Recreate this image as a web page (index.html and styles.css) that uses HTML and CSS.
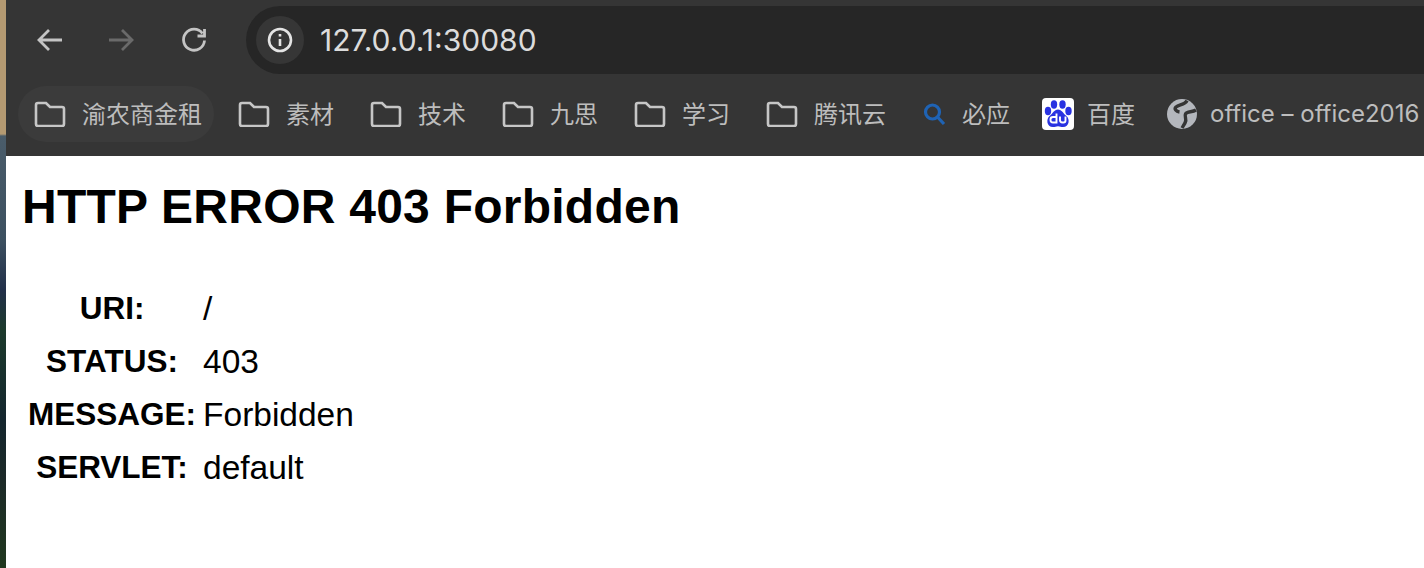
FILE: index.html
```html
<!DOCTYPE html>
<html lang="zh">
<head>
<meta charset="utf-8">
<title>Error 403 Forbidden</title>
<link rel="stylesheet" href="styles.css">
</head>
<body>
<div class="strip"></div>
<div class="window">
  <header class="chrome">
    <div class="navrow">
      <div class="navbtns">
        <svg class="nav" viewBox="0 0 28 28"><path d="M26 14H3M13 4 3 14 13 24"/></svg>
        <svg class="nav dim" viewBox="0 0 28 28"><path d="M2 14H25M15 4 25 14 15 24"/></svg>
        <svg class="nav reload" viewBox="0 0 28 28"><path d="M22.500 7.500A10.500 10.500 0 1 0 24.500 14.500M24.500 3V10H17.500"/></svg>
      </div>
      <div class="omnibox">
        <span class="infochip">
          <svg class="info" viewBox="0 0 26 26"><circle cx="13" cy="13" r="11"/><path d="M13 12v7M13 7v2.500"/></svg>
        </span>
        <span class="url">127.0.0.1:30080</span>
      </div>
    </div>
    <nav class="bookmarks">
      <a class="bm active"><svg class="folder" viewBox="0 0 32 26"><path d="M2 4a2 2 0 0 1 2-2h8l4 4h12a2 2 0 0 1 2 2v15a2 2 0 0 1-2 2H4a2 2 0 0 1-2-2z"/></svg><span>渝农商金租</span></a>
      <a class="bm"><svg class="folder" viewBox="0 0 32 26"><path d="M2 4a2 2 0 0 1 2-2h8l4 4h12a2 2 0 0 1 2 2v15a2 2 0 0 1-2 2H4a2 2 0 0 1-2-2z"/></svg><span>素材</span></a>
      <a class="bm"><svg class="folder" viewBox="0 0 32 26"><path d="M2 4a2 2 0 0 1 2-2h8l4 4h12a2 2 0 0 1 2 2v15a2 2 0 0 1-2 2H4a2 2 0 0 1-2-2z"/></svg><span>技术</span></a>
      <a class="bm"><svg class="folder" viewBox="0 0 32 26"><path d="M2 4a2 2 0 0 1 2-2h8l4 4h12a2 2 0 0 1 2 2v15a2 2 0 0 1-2 2H4a2 2 0 0 1-2-2z"/></svg><span>九思</span></a>
      <a class="bm"><svg class="folder" viewBox="0 0 32 26"><path d="M2 4a2 2 0 0 1 2-2h8l4 4h12a2 2 0 0 1 2 2v15a2 2 0 0 1-2 2H4a2 2 0 0 1-2-2z"/></svg><span>学习</span></a>
      <a class="bm"><svg class="folder" viewBox="0 0 32 26"><path d="M2 4a2 2 0 0 1 2-2h8l4 4h12a2 2 0 0 1 2 2v15a2 2 0 0 1-2 2H4a2 2 0 0 1-2-2z"/></svg><span>腾讯云</span></a>
      <a class="bm bing"><svg class="search" viewBox="0 0 24 24"><circle cx="10.500" cy="10" r="7"/><path d="M15.500 15l6.500 7"/></svg><span>必应</span></a>
      <a class="bm baidu"><svg class="paw" viewBox="0 0 32 32"><rect width="32" height="32" rx="4" fill="#fff"/><g fill="#2932e1"><ellipse cx="6" cy="13" rx="3.200" ry="4.200"/><ellipse cx="12" cy="6.500" rx="3.200" ry="4.200"/><ellipse cx="20.500" cy="6.500" rx="3.200" ry="4.200"/><ellipse cx="26.500" cy="13" rx="3.200" ry="4.200"/><path d="M16 11.500c4 0 5 4 8.500 6.500 3.500 3 3 11-3.500 11-2 0-3-.8-5-.8s-3 .8-5 .8c-6.500 0-7-8-3.500-11 3.500-2.500 4.500-6.500 8.500-6.500z"/></g><path d="M14.500 15.500v9h-3.500a2.500 2.500 0 0 1-2.500-2.500v-.5a2.500 2.500 0 0 1 2.500-2.500h3.500M18 18.500v3.500a2.500 2.500 0 0 0 2.500 2.500h1a2 2 0 0 0 2-2v-4" fill="none" stroke="#fff" stroke-width="1.900"/></svg><span>百度</span></a>
      <a class="bm globe"><svg class="earth" viewBox="0 0 30 30"><circle cx="15" cy="15" r="15" fill="#b4b7bd"/><path d="M20 1.500C18 6 12 5.500 9 8c-2 2 0 4.500 3.500 5M29 11c-4 2.500-9 1-10.500 4-1.500 3 2 5-.5 9l-3 5" fill="none" stroke="#353535" stroke-width="3.400"/></svg><span>office – office2016</span></a>
    </nav>
  </header>
  <main class="page">
    <h2 class="title">HTTP ERROR 403 Forbidden</h2>
    <table class="details">
      <tr><th>URI:</th><td>/</td></tr>
      <tr><th>STATUS:</th><td>403</td></tr>
      <tr><th>MESSAGE:</th><td>Forbidden</td></tr>
      <tr><th>SERVLET:</th><td>default</td></tr>
    </table>
  </main>
</div>
</body>
</html>
```

FILE: styles.css
```css
* { box-sizing: border-box; }
html, body { height: 100%; }
body {
  margin: 0;
  display: flex;
  overflow: hidden;
  background: #fff;
}
.strip {
  flex: 0 0 6px;
  background: linear-gradient(180deg, #b49a72 0, #b49a72 134px, #4a5c6a 136px, #3c5060 240px, #22304a 290px, #1c3a2c 330px, #14262e 420px, #1c2a28 480px, #20381f 568px);
}
.window {
  flex: 1;
  min-width: 0;
  display: flex;
  flex-direction: column;
}
.chrome {
  height: 156px;
  background: #353535;
  overflow: hidden;
}
.navrow {
  height: 86px;
  padding-top: 6px;
  display: flex;
}
.navbtns {
  width: 240px;
  height: 68px;
  padding-left: 30px;
  display: flex;
  align-items: center;
  gap: 43px;
}
.nav {
  width: 28px;
  height: 28px;
  fill: none;
  stroke: #c4c4c4;
  stroke-width: 2.800;
}
.nav.dim { stroke: #6a6a6a; }
.nav.reload { margin-left: 2px; }
.omnibox {
  flex: 1;
  height: 68px;
  margin-right: -60px;
  background: #262626;
  border-radius: 34px;
  padding-left: 10px;
  display: flex;
  align-items: center;
}
.infochip {
  width: 48px;
  height: 48px;
  border-radius: 50%;
  background: #363636;
  display: flex;
  align-items: center;
  justify-content: center;
}
.info {
  width: 26px;
  height: 26px;
  fill: none;
  stroke: #e4e4e4;
  stroke-width: 2.600;
}
.url {
  margin-left: 16px;
  font: 400 30px "Inter", "Liberation Sans", sans-serif;
  color: #dcdcdc;
  white-space: nowrap;
}
.bookmarks {
  height: 56px;
  margin-left: 12px;
  display: flex;
  gap: 8px;
  white-space: nowrap;
}
.bm {
  flex: none;
  height: 56px;
  padding: 0 12px 0 16px;
  border-radius: 28px;
  display: flex;
  align-items: center;
  gap: 16px;
  font: 400 24px "Inter", "Noto Sans CJK SC", sans-serif;
  color: #bdbdbd;
}
.bm span { margin-top: -4px; }
.bm.globe span { margin-top: -2px; }
.bm.active { background: #3b3b3b; }
.folder {
  width: 32px;
  height: 26px;
  fill: none;
  stroke: #c6c6c6;
  stroke-width: 2.600;
}
.search {
  width: 24px;
  height: 24px;
  fill: none;
  stroke: #1f63b4;
  stroke-width: 3.200;
}
.baidu { padding-left: 12px; gap: 13px; }
.paw { width: 32px; height: 32px; }
.globe { padding-left: 12px; gap: 13px; }
.earth { width: 30px; height: 30px; }
.page {
  flex: 1;
  padding: 0 16px;
  color: #000;
  font-family: "Liberation Sans", sans-serif;
}
.title {
  margin: 24px 0 0;
  font-size: 48px;
  line-height: 54px;
  font-weight: 700;
  letter-spacing: .25px;
}
.details {
  margin-top: 46px;
  border-collapse: separate;
  border-spacing: 3px 4px;
}
.details th {
  height: 49px;
  padding: 0 3px;
  font-size: 31.500px;
}
.details td {
  height: 49px;
  padding: 0 0 0 1px;
  font-size: 33.500px;
}
```
